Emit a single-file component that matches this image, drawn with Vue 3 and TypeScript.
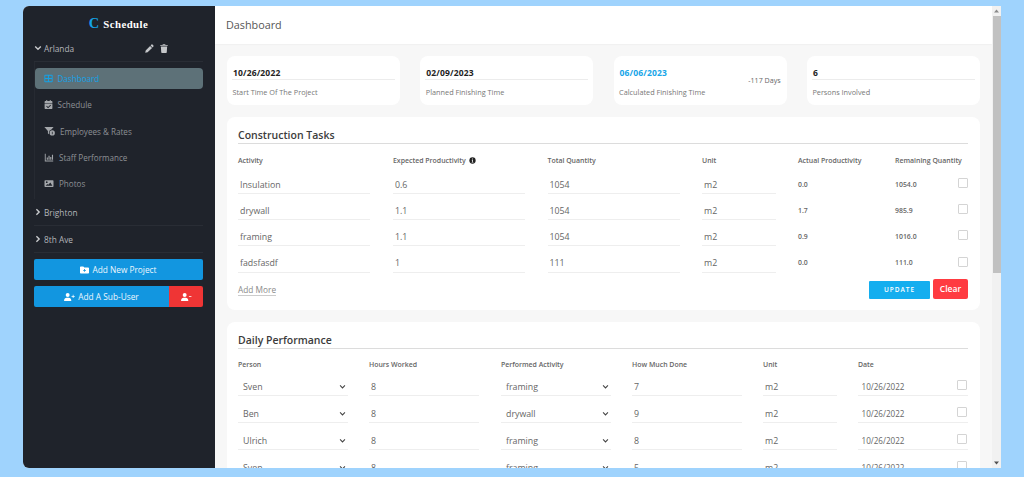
<script setup lang="ts">
interface Stat { value: string; label: string; extra?: string; accent?: boolean }
const stats: Stat[] = [
  { value: '10/26/2022', label: 'Start Time Of The Project' },
  { value: '02/09/2023', label: 'Planned Finishing Time' },
  { value: '06/06/2023', label: 'Calculated Finishing Time', extra: '-117 Days', accent: true },
  { value: '6', label: 'Persons Involved' },
]
const tasks = [
  ['Insulation', '0.6', '1054', 'm2', '0.0', '1054.0'],
  ['drywall', '1.1', '1054', 'm2', '1.7', '985.9'],
  ['framing', '1.1', '1054', 'm2', '0.9', '1016.0'],
  ['fadsfasdf', '1', '111', 'm2', '0.0', '111.0'],
]
const daily = [
  ['Sven', '8', 'framing', '7'],
  ['Ben', '8', 'drywall', '9'],
  ['Ulrich', '8', 'framing', '8'],
  ['Sven', '8', 'framing', '5'],
]
</script>

<template>
  <div class="page">
    <div class="window">
      <aside class="sidebar">
        <div class="brand"><span class="brand-c">C</span><span class="brand-name">Schedule</span></div>

        <div class="project open">
          <svg class="chev" viewBox="0 0 10 10"><path d="M1.5 3 5 6.5 8.5 3" /></svg>
          <span class="project-name">Arlanda</span>
          <svg class="tool pencil" viewBox="0 0 12 12"><path d="M8.6.8a1 1 0 0 1 1.4 0l1.2 1.2a1 1 0 0 1 0 1.4l-1.1 1.1-2.6-2.6zM6.8 2.6l2.6 2.6-5.9 5.9-3.2.7.6-3.3z" /></svg>
          <svg class="tool trash" viewBox="0 0 10 12"><path d="M3.4.4h3.2l.4.8H10v1.2H0V1.2h3zM.8 3.4h8.4l-.5 7.6a1 1 0 0 1-1 1H2.3a1 1 0 0 1-1-1z" /></svg>
        </div>

        <nav class="nav">
          <a class="nav-item active">
            <svg class="nav-icon" viewBox="0 0 12 12"><path fill-rule="evenodd" d="M1.5 1h9A1 1 0 0 1 11.500 2v8a1 1 0 0 1-1 1h-9a1 1 0 0 1-1-1V2a1 1 0 0 1 1-1zm.2 1.200v3.200h3.500V2.200zm4.900 0v3.200h3.700V2.200zM1.700 6.600v3.200h3.500V6.600zm4.900 0v3.200h3.700V6.600z" /></svg>
            Dashboard
          </a>
          <a class="nav-item">
            <svg class="nav-icon" viewBox="0 0 12 12"><path fill-rule="evenodd" d="M3 0h1.300v1.300h3.400V0H9v1.300h1.200a1 1 0 0 1 1 1V4H.8V2.300a1 1 0 0 1 1-1H3zM.8 4.800h10.400V11a1 1 0 0 1-1 1H1.800a1 1 0 0 1-1-1zm7.700 1.600L5.400 9.300 3.800 7.800l-.8.800 2.400 2.300 3.900-3.700z" /></svg>
            Schedule
          </a>
          <a class="nav-item">
            <svg class="nav-icon rates" viewBox="0 0 16 12"><path d="M.5.5h12.300L9.900 3.900a4.200 4.200 0 0 0-3.300 4v2.500L5.200 9.200V6zM11 5a3.500 3.500 0 1 1 0 7 3.500 3.500 0 0 1 0-7z" /><path class="cut" d="M10.500 7h1v3.300h-1z" /></svg>
            Employees &amp; Rates
          </a>
          <a class="nav-item">
            <svg class="nav-icon" viewBox="0 0 12 12"><path d="M.4 1h1.200v9h10v1.200H.4zM3 6h1.500v3H3zm2.300-2.200h1.500V9H5.300zM7.600 5.200h1.500V9H7.600zm2.300-3h1.500V9H9.900z" /></svg>
            Staff Performance
          </a>
          <a class="nav-item">
            <svg class="nav-icon" viewBox="0 0 12 12"><path fill-rule="evenodd" d="M1 1.500h10a1 1 0 0 1 1 1v7a1 1 0 0 1-1 1H1a1 1 0 0 1-1-1v-7a1 1 0 0 1 1-1zM3 3a1.200 1.200 0 1 0 0 2.400A1.200 1.200 0 0 0 3 3zm4.800 1.600L5 7.800 3.800 6.500 1.500 9h9z" /></svg>
            Photos
          </a>
        </nav>

        <div class="project">
          <svg class="chev" viewBox="0 0 10 10"><path d="M3 1.500 6.500 5 3 8.500" /></svg>
          <span class="project-name">Brighton</span>
        </div>
        <div class="project">
          <svg class="chev" viewBox="0 0 10 10"><path d="M3 1.500 6.500 5 3 8.500" /></svg>
          <span class="project-name">8th Ave</span>
        </div>

        <button class="side-btn add-project">
          <svg class="btn-icon" viewBox="0 0 13 11"><path fill-rule="evenodd" d="M1.200.5h3.600l1.300 1.400h5.700a1.200 1.200 0 0 1 1.200 1.200v6.200a1.200 1.200 0 0 1-1.200 1.200H1.200A1.200 1.200 0 0 1 0 9.300V1.700A1.200 1.200 0 0 1 1.200.5zM6 4v1.500H4.500v1.200H6v1.500h1.200V6.700h1.500V5.500H7.200V4z" /></svg>
          Add New Project
        </button>
        <div class="user-btns">
          <button class="side-btn add-user">
            <svg class="btn-icon user" viewBox="0 0 15 11"><circle cx="5" cy="2.800" r="2.700" /><path d="M0 11c0-2.800 1.700-4.400 3.500-4.400h3C8.300 6.600 10 8.200 10 11zM12 2.500h1v1.700h1.700v1H13v1.700h-1V5.200h-1.700v-1H12z" /></svg>
            Add A Sub-User
          </button>
          <button class="side-btn remove-user" aria-label="Remove sub-user">
            <svg class="btn-icon user" viewBox="0 0 15 11"><circle cx="5" cy="2.800" r="2.700" /><path d="M0 11c0-2.800 1.700-4.400 3.500-4.400h3C8.300 6.600 10 8.200 10 11zM10.800 4.200h3.500v1h-3.500z" /></svg>
          </button>
        </div>
      </aside>

      <div class="main">
        <header class="topbar">Dashboard</header>
        <div class="content">
          <section class="stats">
            <div v-for="s in stats" :key="s.label" class="stat">
              <div class="stat-value" :class="{ accent: s.accent, plain: s.extra }">{{ s.value }}</div>
              <div class="stat-label">{{ s.label }}</div>
              <span v-if="s.extra" class="stat-extra">{{ s.extra }}</span>
            </div>
          </section>

          <section class="card tasks">
            <h2 class="card-title">Construction Tasks</h2>
            <div class="task-grid heads">
              <span>Activity</span>
              <span class="with-info">Expected Productivity
                <svg class="info" viewBox="0 0 10 10"><circle cx="5" cy="5" r="4.500" /><path class="i" d="M4.400 2h1.200v1.200H4.400zM4 4.100h1.600v3H6.300V8H3.800v-.9h.7V5H4z" /></svg>
              </span>
              <span>Total Quantity</span>
              <span>Unit</span>
              <span>Actual Productivity</span>
              <span>Remaining Quantity</span>
            </div>
            <div v-for="t in tasks" :key="t[0]" class="task-grid row">
              <input class="field" :value="t[0]" />
              <input class="field" :value="t[1]" />
              <input class="field" :value="t[2]" />
              <input class="field" :value="t[3]" />
              <span class="calc">{{ t[4] }}</span>
              <span class="calc">{{ t[5] }}</span>
              <span class="check" />
            </div>
            <div class="actions">
              <a class="add-more">Add More</a>
              <button class="update">UPDATE</button>
              <button class="clear">Clear</button>
            </div>
          </section>

          <section class="card daily">
            <h2 class="card-title">Daily Performance</h2>
            <div class="daily-grid heads">
              <span>Person</span>
              <span>Hours Worked</span>
              <span>Performed Activity</span>
              <span>How Much Done</span>
              <span>Unit</span>
              <span>Date</span>
            </div>
            <div v-for="(d, i) in daily" :key="i" class="daily-grid row">
              <div class="field sel">{{ d[0] }}<svg viewBox="0 0 10 10"><path d="M1.500 3.500 5 7l3.500-3.500" /></svg></div>
              <input class="field" :value="d[1]" />
              <div class="field sel">{{ d[2] }}<svg viewBox="0 0 10 10"><path d="M1.500 3.500 5 7l3.500-3.500" /></svg></div>
              <input class="field" :value="d[3]" />
              <input class="field" value="m2" />
              <div class="date-cell">
                <input class="field date" value="10/26/2022" />
                <span class="check" />
              </div>
            </div>
          </section>
        </div>
      </div>

      <div class="scrollbar">
        <svg class="arrow" viewBox="0 0 9 9"><path d="M4.500 3 7 6H2z" /></svg>
        <div class="thumb" />
        <svg class="arrow down" viewBox="0 0 9 9"><path d="M2 3h5L4.500 6z" /></svg>
      </div>
    </div>
  </div>
</template>

<style>
html, body { margin: 0; background: #9fd3fd; }
</style>

<style scoped>
* { box-sizing: border-box; }
.page {
  height: 477px;
  padding: 6px 23px 9px;
  background: #9fd3fd;
  font-family: "Open Sans", "Liberation Sans", sans-serif;
  overflow: hidden;
}
.window {
  display: flex;
  height: 462px;
  background: #f7f7f7;
  overflow: hidden;
  border-radius: 6px 0 0 6px;
}
.sidebar {
  flex: 0 0 192px;
  background: #1f232b;
  padding: 0 12px 0 11px;
  color: #a4a7ab;
}
.brand {
  display: flex;
  justify-content: center;
  align-items: baseline;
  height: 29px;
  padding-top: 8px;
  gap: 4px;
  font-family: "Liberation Serif", serif;
  font-weight: 700;
}
.brand-c { color: #14a2e6; font-size: 14.500px; line-height: 18px; }
.brand-name { color: #fff; font-size: 10.800px; letter-spacing: .45px; line-height: 18px; }
.project {
  display: flex;
  align-items: center;
  height: 27px;
  border-bottom: 1px solid #292d35;
  font-size: 8.300px;
  font-weight: 400;
  color: #b4b6ba;
}
.chev { width: 8px; height: 8px; margin-right: 2px; flex: none; }
.chev path { fill: none; stroke: #c9cbce; stroke-width: 1.700; }
.project-name { flex: none; width: 101px; }
.tool { fill: #c4c6c9; height: 9px; flex: none; }
.pencil { width: 9px; }
.trash { width: 8px; margin-left: 6px; }
.nav {
  border-left: 1px solid #262a32;
  padding-top: 6px;
  height: 137px;
}
.nav-item {
  display: flex;
  align-items: center;
  gap: 4px;
  height: 21px;
  margin: 0 0 5.300px 0;
  padding-left: 9px;
  font-size: 8.100px;
  color: #8d9095;
  border-radius: 4px;
}
.nav-item.active {
  background: #5d7178;
  color: #14a2e6;
}
.nav-icon { width: 9px; height: 9px; fill: #a4a7ab; flex: none; }
.active .nav-icon { fill: #14a2e6; }
.nav-item .rates { width: 12px; height: 10px; }
.nav-item:nth-child(n+4) .nav-icon { width: 10px; }
.nav-item:nth-child(n+4) { gap: 5px; }
.nav-item:nth-child(1), .nav-item:nth-child(2) { gap: 4.500px; }
.nav-item .cut { fill: #1f232b; }
.side-btn {
  display: flex;
  align-items: center;
  justify-content: center;
  gap: 3px;
  height: 21px;
  border: 0;
  border-radius: 2px;
  color: #eef7fd;
  font-family: inherit;
  font-size: 8.300px;
  font-weight: 400;
  padding: 0;
}
.add-project { width: 169px; margin-top: 6px; background: #1296e0; }
.btn-icon { width: 9px; height: 8px; fill: #fff; flex: none; }
.btn-icon.user { width: 11px; height: 8px; }
.user-btns { display: flex; margin-top: 6px; width: 169px; }
.add-user { flex: 0 0 135px; background: #1296e0; border-radius: 2px 0 0 2px; }
.remove-user { flex: 1; background: #ef3535; border-radius: 0 2px 2px 0; }
.main {
  width: 777px;
  flex: none;
  min-width: 0;
  display: flex;
  flex-direction: column;
}
.topbar {
  flex: 0 0 38px;
  background: #fff;
  padding: 11px 0 0 11px;
  font-size: 10.800px;
  line-height: 15px;
  color: #555;
  font-weight: 500;
  box-shadow: 0 0 2px rgba(0, 0, 0, .08);
  position: relative;
}
.content {
  flex: 1;
  overflow: hidden;
  padding: 12px 12px 0;
}
.stats {
  display: grid;
  grid-template-columns: repeat(4, 173px);
  gap: 20.300px;
}
.stat {
  position: relative;
  height: 49px;
  background: #fff;
  border-radius: 8px;
  padding: 11px 5px 0;
}
.stat-value {
  font-size: 8.500px;
  font-weight: 700;
  line-height: 12px;
  color: #222;
  border-bottom: 1px solid #ececec;
  height: 13px;
  padding-left: 1px;
  letter-spacing: .15px;
}
.stat-value.accent { color: #16a5e8; }
.stat-value.plain { border-bottom-color: transparent; }
.stat-label {
  margin-top: 7px;
  padding-left: .5px;
  font-size: 7.300px;
  line-height: 11px;
  color: #777;
}
.stat-extra {
  position: absolute;
  right: 6px;
  top: 19px;
  font-size: 7.100px;
  line-height: 11px;
  color: #666;
}
.card {
  background: #fff;
  border-radius: 8px;
  margin-top: 12px;
  padding: 11px 12px 0 11px;
}
.tasks { height: 193px; }
.daily { height: 200px; }
.card-title {
  margin: 0;
  font-size: 10.500px;
  line-height: 15px;
  height: 16px;
  font-weight: 600;
  color: #3c3c3c;
  border-bottom: 1px solid #dcdcdc;
}
.task-grid, .daily-grid {
  display: grid;
  align-items: center;
}
.task-grid { grid-template-columns: 155px 154.500px 154.500px 96px 97px 63px 1fr; }
.daily-grid { grid-template-columns: 131px 132px 131px 131px 95px 1fr; }
.heads {
  height: 11px;
  margin-top: 10.500px;
  margin-bottom: 6.500px;
  font-size: 6.950px;
  font-weight: 600;
  color: #666;
  white-space: nowrap;
}
.daily-grid.heads { margin-top: 9.500px; margin-bottom: 4px; }
.row { height: 26.200px; }
.daily-grid.row { height: 27px; }
.with-info { display: flex; align-items: center; gap: 3px; }
.info { width: 7px; height: 7px; fill: #222; }
.info .i { fill: #fff; }
.field {
  display: block;
  width: 132px;
  height: 18px;
  padding: 0 2px;
  border: 0;
  border-bottom: 1px solid #eee;
  outline: 0;
  background: #fff;
  color: #666;
  font-family: inherit;
  font-size: 8.800px;
  line-height: 17px;
}
.task-grid .field:nth-child(4) { width: 74px; }
.daily-grid > .field { width: 110px; }
.daily-grid > .field:nth-child(5) { width: 74px; }
.sel {
  display: flex;
  align-items: center;
  justify-content: space-between;
  padding: 1px 2px 0 5px;
}
.sel svg { width: 7px; height: 7px; fill: none; stroke: #444; stroke-width: 1.500; margin-top: -1px; }
.calc { font-size: 6.900px; font-weight: 600; color: #666; margin-bottom: 2px; }
.check {
  display: block;
  width: 10px;
  height: 10px;
  border: 1px solid #d4d4d4;
  border-radius: 1px;
  background: #fff;
  justify-self: end;
  margin: 0 1px 4px 0;
}
.date-cell { display: flex; align-items: center; position: relative; }
.field.date { width: 110px; padding-left: 3.500px; font-size: 8.100px; }
.date-cell .check { position: absolute; right: 0; top: 2px; margin: 0 1px 0 0; }
.actions {
  display: flex;
  align-items: flex-end;
  margin-top: 2px;
  height: 20px;
}
.add-more {
  font-size: 8.300px;
  color: #8a8a8a;
  border-bottom: 1px solid #ccc;
  line-height: 10px;
  margin: 3px auto 0 0;
  align-self: center;
}
.update, .clear {
  border: 0;
  font-family: inherit;
  color: #fff;
  padding: 0;
}
.update {
  width: 61px;
  height: 18px;
  margin-right: 3px;
  background: #14aeef;
  border-radius: 1px;
  font-size: 6.500px;
  font-weight: 600;
  letter-spacing: 1px;
}
.clear {
  width: 35px;
  height: 20px;
  background: #ff3b41;
  border-radius: 2px;
  font-size: 8.500px;
  font-weight: 600;
}
.scrollbar {
  flex: 1;
  display: flex;
  flex-direction: column;
  background: #f1f1f1;
  position: relative;
  align-items: center;
}
.arrow { flex: none; width: 9px; height: 10px; fill: #8a8a8a; }
.thumb { width: 8px; height: 257px; background: #c1c1c1; }
.arrow.down { margin-top: auto; fill: #505050; }
</style>
